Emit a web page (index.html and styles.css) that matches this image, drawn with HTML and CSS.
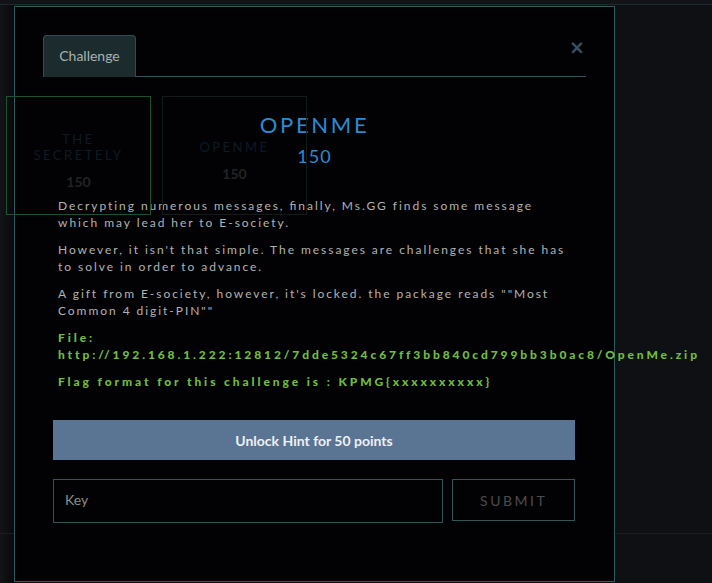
FILE: index.html
```html
<!DOCTYPE html>
<html>
<head>
<meta charset="utf-8">
<link rel="stylesheet" href="styles.css">
</head>
<body>
<div class="page">
  <div class="topbar"></div>
  <div class="leftshade"></div>
  <div class="footline"></div>

  <div class="modal">
    <div class="tabs">
      <div class="tab">Challenge</div>
      <div class="tabline"></div>
      <button class="close">&times;</button>
    </div>

    <div class="body">
      <h1 class="title">OPENME</h1>
      <div class="value">150</div>
      <div class="desc">
        <p>Decrypting numerous messages, ﬁnally, Ms.GG finds some message which may lead her to E-society.</p>
        <p>However, it isn't that simple. The messages are challenges that she has to solve in order to advance.</p>
        <p>A gift from E-society, however, it's locked. the package reads ""Most Common 4 digit-PIN""</p>
        <p class="green">File: http://192.168.1.222:12812/7dde5324c67ff3bb840cd799bb3b0ac8/OpenMe.zip</p>
        <p class="green">Flag format for this challenge is : KPMG{xxxxxxxxxx}</p>
      </div>
      <button class="hint">Unlock Hint for 50 points</button>
      <div class="submitrow">
        <div class="key">Key</div>
        <button class="submit">SUBMIT</button>
      </div>
    </div>
  </div>

  <div class="cards">
    <div class="card solved">
      <div class="cname">THE<br>SECRETELY</div>
      <div class="cval">150</div>
    </div>
    <div class="card">
      <div class="cname">OPENME</div>
      <div class="cval">150</div>
    </div>
  </div>
</div>
</body>
</html>
```

FILE: styles.css
```css
* { box-sizing: border-box; }
html, body { margin: 0; padding: 0; }
body {
  width: 712px;
  height: 583px;
  overflow: hidden;
  background: #0e1013;
  font-family: Lato, "Open Sans", sans-serif;
}
.page {
  position: relative;
  width: 712px;
  height: 583px;
}
.topbar {
  height: 5px;
  background: #111316;
  border-bottom: 1px solid #1b2a2c;
}
.leftshade {
  position: absolute;
  left: 0; top: 5px;
  width: 14px; height: 578px;
  background: linear-gradient(90deg, #121417, #08090b);
}
.footline {
  position: absolute;
  left: 0; top: 533px;
  width: 712px; height: 1px;
  background: #1a1e21;
}
.modal {
  position: absolute;
  left: 14px; top: 6px;
  width: 601px; height: 576px;
  background: rgba(2, 2, 4, 0.97);
  border: 1px solid #2f5a5c;
  padding: 28px 28px 0 28px;
}
.tabs {
  display: flex;
  align-items: flex-end;
  position: relative;
  height: 42px;
}
.tab {
  width: 93px;
  height: 42px;
  background: #1b2b2e;
  border: 1px solid #2b4f50;
  border-bottom: none;
  border-radius: 4px 4px 0 0;
  color: #a9b1b1;
  font-size: 14px;
  padding-bottom: 2px;
  display: flex;
  align-items: center;
  justify-content: center;
}
.tabline {
  flex: 1;
  height: 1px;
  background: #2f5658;
}
.close {
  position: absolute;
  right: 1px; top: 2px;
  background: none;
  border: none;
  padding: 0;
  color: #3b5063;
  font-size: 19px;
  font-weight: bold;
  font-family: "DejaVu Sans", sans-serif;
  line-height: 20px;
}
.body {
  padding: 0 10px;
}
.title {
  margin: 33px 0 0 0;
  text-align: center;
  color: #2a8bd2;
  font-size: 22px;
  font-weight: 400;
  letter-spacing: 2.7px;
  line-height: 30px;
}
.value {
  text-align: center;
  color: #2a8bd2;
  font-size: 18px;
  letter-spacing: 1px;
  line-height: 22px;
  margin-top: 5px;
}
.desc {
  margin-top: 30px;
  padding: 0 5px;
  width: 522px;
}
.desc p {
  margin: 0 0 10px 0;
  color: #b2b2b2;
  font-size: 12px;
  line-height: 17px;
  letter-spacing: 1.95px;
}
.desc p.green {
  color: #70bd3e;
  font-weight: 900;
  letter-spacing: 2.9px;
}
.hint {
  display: block;
  width: 522px;
  height: 40px;
  margin-top: 30px;
  background: #5a7494;
  border: none;
  color: #eef1f4;
  font-family: Lato, sans-serif;
  font-size: 14px;
  font-weight: bold;
}
.submitrow {
  display: flex;
  gap: 9px;
  margin-top: 19px;
  width: 522px;
}
.key {
  width: 391px;
  height: 44px;
  border: 1px solid #2f5658;
  color: #8c8c8c;
  font-size: 14px;
  padding: 0 11px 3px 11px;
  display: flex;
  align-items: center;
}
.submit {
  width: 123px;
  height: 42px;
  background: transparent;
  border: 1px solid #2f5658;
  color: #4c4c4c;
  font-family: Lato, sans-serif;
  font-size: 14px;
  letter-spacing: 2.5px;
}
.cards {
  position: absolute;
  left: 6px; top: 96px;
  display: flex;
  gap: 11px;
}
.card {
  width: 145px;
  height: 119px;
  border: 1px solid #111b19;
  display: flex;
  flex-direction: column;
  align-items: center;
  justify-content: center;
  gap: 10px;
  padding-top: 10px;
}
.card.solved {
  border-color: #1c5230;
}
.cname {
  color: #0d1a26;
  font-size: 13px;
  letter-spacing: 2.5px;
  line-height: 16px;
  text-align: center;
}
.cval {
  color: #232323;
  font-size: 14px;
  font-weight: bold;
}
```
